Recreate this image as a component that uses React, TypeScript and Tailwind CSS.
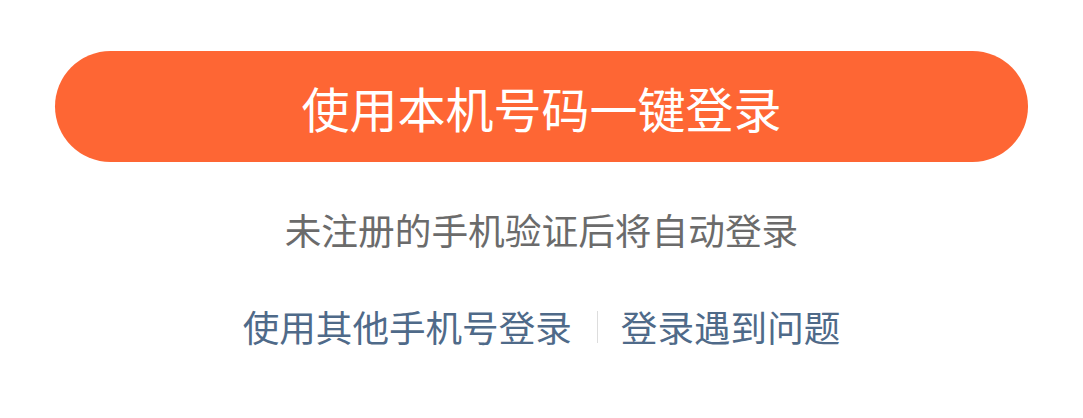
export default function App() {
  return (
    <div
      className="w-[1083px] h-[418px] bg-white flex flex-col items-center"
      style={{ fontFamily: '"Noto Sans CJK SC", "Noto Sans", sans-serif' }}
    >
      <button
        type="button"
        className="mt-[51px] w-[973px] h-[111px] rounded-full bg-[#fe6634] text-white text-[48px] leading-[48px] flex items-center justify-center"
      >
        使用本机号码一键登录
      </button>
      <div className="mt-[49px] text-[36.7px] leading-[37px] text-[#6b6b6b]">
        未注册的手机验证后将自动登录
      </div>
      <div className="mt-[60px] flex items-center text-[36.6px] leading-[37px] text-[#4f6a89]">
        <span>使用其他手机号登录</span>
        <span className="ml-[25px] mr-[23px] w-px h-[32px] bg-[#dddddd]" />
        <span>登录遇到问题</span>
      </div>
    </div>
  );
}
